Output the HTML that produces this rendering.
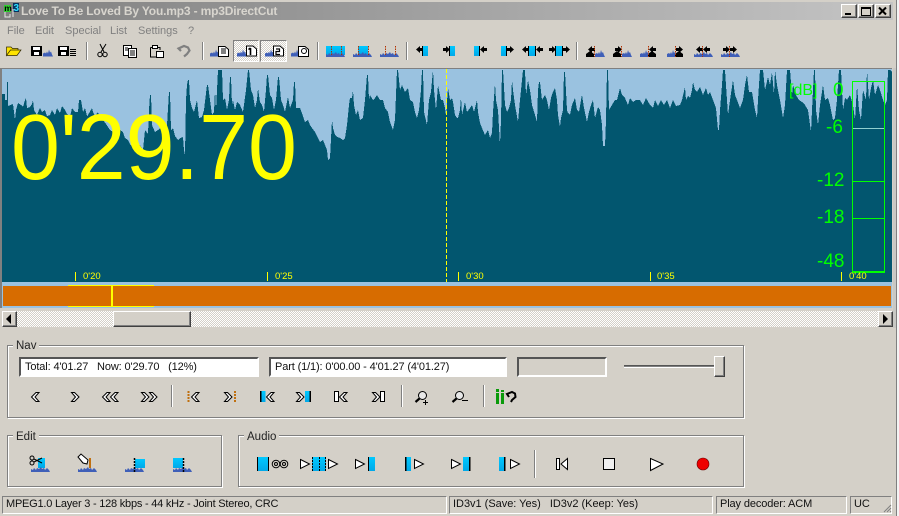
<!DOCTYPE html>
<html><head><meta charset="utf-8"><title>mp3DirectCut</title>
<style>
html,body{margin:0;padding:0;width:899px;height:516px;overflow:hidden;background:#d4d0c8}
body{position:relative;font-family:"Liberation Sans",sans-serif;font-size:11px;color:#000}
.a{position:absolute;white-space:pre}
.title{left:0;top:2px;width:893px;height:18px;background:linear-gradient(90deg,#808080,#c4c4c4)}
.ttxt{left:21px;top:3px;font-weight:bold;font-size:12px;letter-spacing:-.17px;line-height:16px;color:#d8d5ce}
.menu{top:24px;font-size:11px;line-height:14px;color:#808080}
.btn{background:#d4d0c8;box-sizing:border-box;border:1px solid;border-color:#fff #404040 #404040 #fff;box-shadow:inset -1px -1px 0 #808080}
.group{box-sizing:border-box;border:1px solid #808080;box-shadow:1px 1px 0 #fff,inset 1px 1px 0 #fff}
.leg{background:#d4d0c8;padding:0 3px;font-size:11.500px;line-height:14px;color:#222}
.field{box-sizing:border-box;background:#fff;border:2px solid;border-color:#555 #fff #fff #555;font-size:11px;letter-spacing:-.13px;line-height:15px;padding:1px 0 0 4px;color:#111}
.stat{box-sizing:border-box;top:496px;height:18px;border:1px solid;border-color:#808080 #fff #fff #808080;font-size:11px;letter-spacing:-.12px;line-height:15px;padding-left:3px;color:#111}
.dither{background:repeating-conic-gradient(#fff 0 25%,#d4d0c8 0 50%) 0 0/2px 2px}
.t{font-size:9.500px;line-height:12px;color:#ffff00;top:271px}
.g{font-size:19px;line-height:20px;color:#00ff00}
</style></head><body>
<div class="a title"></div>
<div class="a" style="left:896px;top:0;width:1px;height:516px;background:#808080"></div>
<div class="a" style="left:897px;top:0;width:2px;height:516px;background:#f4f4f4"></div>
<div class="a ttxt">Love To Be Loved By You.mp3 - mp3DirectCut</div>
<div class="a menu" style="left:7px">File</div>
<div class="a menu" style="left:35px">Edit</div>
<div class="a menu" style="left:65px">Special</div>
<div class="a menu" style="left:110px">List</div>
<div class="a menu" style="left:138px">Settings</div>
<div class="a menu" style="left:188px">?</div>
<div class="a btn" style="left:841px;top:4px;width:16px;height:14px"></div>
<div class="a btn" style="left:858px;top:4px;width:16px;height:14px"></div>
<div class="a btn" style="left:875px;top:4px;width:16px;height:14px"></div>
<div class="a dither" style="left:233px;top:40px;width:26px;height:22px;box-sizing:border-box;border:1px solid;border-color:#808080 #fff #fff #808080"></div>
<div class="a dither" style="left:260px;top:40px;width:27px;height:22px;box-sizing:border-box;border:1px solid;border-color:#808080 #fff #fff #808080"></div>

<!-- waveform -->
<div class="a" style="left:0;top:68px;width:892px;height:1px;background:#808080"></div>
<div class="a" style="left:0;top:68px;width:2px;height:240px;background:#808080"></div>
<svg class="a" style="left:2px;top:69px" width="890" height="214" viewBox="2 69 890 214">
<rect x="2" y="69" width="890" height="214" fill="#9ac2e0"/>
<polygon fill="#02566f" shape-rendering="crispEdges" points="2,282 2,94 5,94 5,100 7,100 7,82 8,82 8,106 13,104 15,120 16,110 18,103 21,105 23,107 25,100 26,98 27,108 30,107 32,104 33,100 34,110 37,115 39,110 40,108 42,112 45,110 47,116 50,115 52,110 55,115 57,108 60,113 62,106 65,110 67,114 70,117 72,108 75,112 78,112 79,100 81,100 83,112 85,108 87,116 88,115 92,108 93,112 95,116 98,112 100,118 103,120 106,124 108,127 110,130 113,132 116,134 118,135 120,130 123,132 125,138 128,140 130,144 133,148 136,146 140,145 143,150 145,130 148,134 149,110 150,95 151,95 152,125 155,132 158,130 160,128 163,134 165,132 167,125 169,92 170,92 171,130 173,128 175,136 178,140 180,138 183,137 184,150 185,155 186,100 187,85 188,80 189,80 190,100 192,108 194,112 197,100 199,118 202,117 204,110 207,85 208,85 210,100 212,115 214,112 215,90 216,110 218,70 222,70 223,100 225,98 227,110 229,100 230,77 231,77 232,105 233,100 235,110 237,102 240,105 243,112 246,90 248,70 249,70 251,90 253,95 255,108 257,100 258,88 260,102 262,105 264,112 266,90 267,75 268,75 270,95 272,98 274,110 276,100 278,77 279,77 281,100 283,105 285,112 288,97 290,108 293,100 294,82 295,82 296,108 300,108 303,116 305,122 308,120 310,125 312,128 315,132 318,138 320,142 323,140 325,145 327,150 328,160 330,158 332,120 333,128 335,135 337,137 340,138 343,140 345,138 347,125 349,105 350,98 352,98 353,90 354,105 356,115 358,110 360,120 363,118 365,100 367,75 368,75 369,100 370,95 373,100 375,98 377,95 380,100 383,100 385,108 388,112 390,122 393,130 395,120 397,70 398,70 400,90 402,85 405,92 408,88 410,100 413,102 415,112 417,118 419,110 421,90 422,70 423,70 424,112 427,125 429,100 431,92 433,70 434,90 436,110 438,85 441,100 443,100 445,108 446,115 448,88 450,100 452,98 453,102 455,115 457,118 458,118 460,110 461,97 462,115 465,102 467,112 470,108 472,105 474,112 477,100 478,112 480,123 482,128 485,135 488,130 490,138 492,133 493,112 495,83 496,100 498,110 500,145 501,120 502,70 503,70 505,105 507,112 509,108 511,100 512,80 513,90 515,105 518,122 520,100 521,90 523,70 525,70 526,95 528,80 530,90 532,105 535,115 537,122 538,90 539,82 540,82 542,100 545,95 547,100 549,110 551,98 553,92 555,88 557,100 558,115 560,127 561,118 563,110 564,72 565,72 567,110 568,113 570,115 572,105 575,98 577,110 579,112 581,100 582,95 584,108 587,122 589,112 591,105 593,100 595,118 598,107 600,110 602,125 603,146 605,146 606,120 607,70 608,70 609,110 612,105 615,100 617,100 620,88 622,95 625,98 628,105 630,98 633,102 636,100 640,100 643,105 646,98 650,105 653,108 655,100 658,106 661,100 664,105 667,100 670,108 673,100 676,106 680,105 682,100 685,87 686,100 688,96 690,98 692,90 693,82 695,90 697,92 700,87 703,95 706,88 708,95 710,92 713,100 716,108 718,130 719,130 720,110 722,85 723,70 725,70 727,100 728,115 730,100 733,80 735,95 737,100 740,108 743,100 745,85 747,75 749,92 752,92 755,110 757,118 758,100 760,70 763,70 765,90 768,77 770,85 772,72 774,95 775,70 777,85 780,100 783,118 785,105 787,70 790,70 792,95 793,85 796,95 799,100 802,102 805,105 808,110 811,132 812,110 814,70 815,70 816,110 818,125 820,105 823,85 825,100 828,98 830,105 833,120 835,118 837,100 839,70 841,70 843,110 845,98 847,100 850,95 853,105 855,120 857,86 859,110 861,120 863,90 866,100 867,70 869,100 871,88 873,80 875,95 878,85 880,90 883,100 885,105 887,100 888,70 890,70 892,72 892,282"/>
<line x1="446.500" y1="69" x2="446.500" y2="282" stroke="#ffff00" stroke-dasharray="4 2"/>
<g fill="#00ff00" shape-rendering="crispEdges">
<rect x="852" y="81" width="33" height="1"/>
<rect x="852" y="81" width="1" height="192"/>
<rect x="884" y="81" width="1" height="192"/>
<rect x="852" y="181" width="33" height="1"/>
<rect x="852" y="218" width="33" height="1"/>
<rect x="852" y="271" width="33" height="2"/>
<rect x="853" y="128" width="31" height="1" fill="#8fd0d0"/>
</g>
<g stroke="#ffff00" shape-rendering="crispEdges"><path d="M75.500 272V281M267.500 272V281M458.500 272V281M650.500 272V281M841.500 272V281"/></g>
</svg>
<div class="a" style="left:11px;top:99px;font-size:88px;line-height:100px;color:#ffff00;transform:scaleY(1.05);transform-origin:0 79px">0'29.70</div>
<div class="a" style="left:789px;top:82px;font-size:16px;line-height:18px;color:#00ff00">[dB]</div>
<div class="a g" style="left:833px;top:81px">0</div>
<div class="a g" style="left:826px;top:118px">-6</div>
<div class="a g" style="left:817px;top:171px">-12</div>
<div class="a g" style="left:817px;top:208px">-18</div>
<div class="a g" style="left:817px;top:252px">-48</div>
<div class="a t" style="left:83px">0'20</div>
<div class="a t" style="left:275px">0'25</div>
<div class="a t" style="left:466px">0'30</div>
<div class="a t" style="left:657px">0'35</div>
<div class="a t" style="left:849px">0'40</div>

<!-- overview -->
<div class="a" style="left:2px;top:283px;width:890px;height:25px;background:#9ac2e0"></div>
<div class="a" style="left:3px;top:286px;width:888px;height:20px;background:#d76c00"></div>
<div class="a" style="left:68px;top:285px;width:86px;height:1px;background:#ffff00"></div>
<div class="a" style="left:68px;top:306px;width:86px;height:1px;background:#ffff00"></div>
<div class="a" style="left:111px;top:285px;width:2px;height:22px;background:#ffff00"></div>
<div class="a" style="left:893px;top:68px;width:3px;height:260px;background:#c8c8c4"></div>

<!-- scrollbar -->
<div class="a dither" style="left:2px;top:311px;width:891px;height:16px"></div>
<div class="a btn" style="left:2px;top:311px;width:15px;height:16px"></div>
<div class="a btn" style="left:878px;top:311px;width:15px;height:16px"></div>
<div class="a btn" style="left:113px;top:311px;width:78px;height:16px"></div>

<!-- Nav -->
<div class="a group" style="left:7px;top:345px;width:737px;height:73px"></div>
<div class="a leg" style="left:13px;top:339px">Nav</div>
<div class="a field" style="left:19px;top:357px;width:240px;height:20px">Total: 4'01.27   Now: 0'29.70   (12%)</div>
<div class="a field" style="left:269px;top:357px;width:238px;height:20px">Part (1/1): 0'00.00 - 4'01.27 (4'01.27)</div>
<div class="a field" style="left:517px;top:357px;width:90px;height:20px;background:#d4d0c8"></div>
<div class="a" style="left:624px;top:365px;width:91px;height:1px;background:#555"></div>
<div class="a" style="left:624px;top:366px;width:91px;height:1px;background:#808080"></div>
<div class="a" style="left:624px;top:367px;width:91px;height:1px;background:#fff"></div>
<div class="a btn" style="left:714px;top:356px;width:11px;height:21px"></div>

<!-- Edit / Audio -->
<div class="a group" style="left:7px;top:435px;width:215px;height:52px"></div>
<div class="a leg" style="left:13px;top:430px">Edit</div>
<div class="a group" style="left:238px;top:435px;width:506px;height:52px"></div>
<div class="a leg" style="left:244px;top:430px">Audio</div>

<!-- status -->
<div class="a stat" style="left:2px;width:445px;letter-spacing:-.22px">MPEG1.0 Layer 3 - 128 kbps - 44 kHz - Joint Stereo, CRC</div>
<div class="a stat" style="left:449px;width:264px;letter-spacing:-.02px">ID3v1 (Save: Yes)   ID3v2 (Keep: Yes)</div>
<div class="a stat" style="left:716px;width:131px">Play decoder: ACM</div>
<div class="a stat" style="left:850px;width:42px">UC</div>

<!-- icons -->
<svg class="a" style="left:0;top:0" width="899" height="516" viewBox="0 0 899 516">
<defs>
<linearGradient id="b" x1="0" y1="0" x2="0" y2="1"><stop offset="0" stop-color="#00c8ff"/><stop offset="1" stop-color="#00a8e8"/></linearGradient>
<symbol id="w" overflow="visible"><polygon fill="#3f5fb8" points="0,7 0,4 2,3 3,4 4,2 5,4 6,0 7,3 8,2 9,5 10,7"/></symbol>
<symbol id="ww" overflow="visible"><polygon fill="#3f5fb8" points="0,7 0,4 2,5 3,3 5,5 6,3 8,4 10,2 11,4 13,3 14,5 16,3 18,5 19,7"/></symbol>
<symbol id="al" overflow="visible"><polygon fill="#000" points="0,3.500 4,0 4,2 7,2 7,5 4,5 4,7"/></symbol>
<symbol id="ar" overflow="visible"><polygon fill="#000" points="7,3.500 3,0 3,2 0,2 0,5 3,5 3,7"/></symbol>
<symbol id="cl" overflow="visible"><polygon fill="#fff" stroke="#000" points="5,0.500 8,0.500 4,5 8,9.500 5,9.500 0.500,5"/></symbol>
<symbol id="cr" overflow="visible"><polygon fill="#fff" stroke="#000" points="3.500,0.500 0.500,0.500 4.500,5 0.500,9.500 3.500,9.500 8,5"/></symbol>
<symbol id="pl" overflow="visible"><polygon fill="#fff" stroke="#000" points="0.500,0.500 9.500,5 0.500,9.500"/></symbol>
<symbol id="mag" overflow="visible"><circle cx="7.500" cy="4.500" r="4" fill="#e8e8e8" stroke="#000"/><path d="M4.500 7.500L0.500 11" stroke="#000" stroke-width="2.200" fill="none"/></symbol>
<symbol id="doc" overflow="visible"><path d="M0.500 0.500H7L10.500 3.500V10.500H0.500Z" fill="#fff" stroke="#000"/></symbol>
</defs>

<!-- app icon -->
<rect x="4" y="5" width="7" height="7" fill="#30d030"/><text x="4.300" y="11" font-family="Liberation Sans" font-weight="bold" font-size="8.500" fill="#000">m</text>
<rect x="13" y="3" width="6" height="9" fill="#063060"/><text x="13.500" y="11" font-family="Liberation Sans" font-weight="bold" font-size="10" fill="#30e0ff">3</text>
<path d="M5 12V17H10V14M13 9V17" stroke="#e8e8e8" fill="none"/>
<!-- window buttons -->
<path d="M845 13H851V15H845Z" fill="#000"/>
<path d="M861.500 7.500H870.500V15.500H861.500ZM861 8.500H871" fill="none" stroke="#000"/>
<path d="M879 7.500L886 14.500M886 7.500L879 14.500" stroke="#000" stroke-width="2" fill="none"/>

<!-- toolbar -->
<path d="M6.500 55.500V47H11L12.500 48.500H18V50H10.500L6.500 55.500H17L21 50H10.500Z" fill="#ffe400" stroke="#302800" stroke-width=".7"/>
<rect x="31" y="46" width="11" height="10" fill="#000"/><rect x="33" y="47" width="7" height="3" fill="#fff"/><rect x="34" y="52" width="5" height="3" fill="#fff"/>
<use href="#w" x="43" y="49.500"/>
<rect x="58" y="46" width="11" height="10" fill="#000"/><rect x="60" y="47" width="7" height="3" fill="#fff"/><rect x="61" y="52" width="5" height="3" fill="#fff"/>
<path d="M70 49.500H76M70 51.500H76M70 53.500H76M70 55.500H76" stroke="#000" fill="none"/>
<g fill="none" stroke="#000"><path d="M100 44L104 52M106 44L101 52"/><circle cx="100" cy="54.500" r="2.200"/><circle cx="105" cy="54.500" r="2.200"/></g>
<rect x="123.500" y="45.500" width="8" height="10" fill="#fff" stroke="#000"/><rect x="128.500" y="48.500" width="8" height="9" fill="#fff" stroke="#000"/>
<path d="M130 51H135M130 53H135M130 55H135M125 48H128M125 50H128" stroke="#000"/>
<path d="M150.500 47.500H160V50M150.500 47.500V57H156" fill="#d4d0c8" stroke="#000"/><rect x="152.500" y="45.500" width="5" height="3" fill="#fff" stroke="#000"/><rect x="156.500" y="51.500" width="7" height="6" fill="#fff" stroke="#000"/>
<path d="M181 51L178.500 48.500 184 46 188 47.500 189.500 50.500 187 54 184 56.500" fill="none" stroke="#808080" stroke-width="2.200"/>
<g shape-rendering="crispEdges">
<path d="M86 42H87V60H86ZM202 42H203V60H202ZM317 42H318V60H317ZM406 42H407V60H406ZM576 42H577V60H576Z" fill="#808080"/>
<path d="M87 42H88V60H87ZM203 42H204V60H203ZM318 42H319V60H318ZM407 42H408V60H407ZM577 42H578V60H577Z" fill="#fff"/>
</g>
<use href="#w" x="210" y="49.500"/><use href="#doc" x="218" y="46"/><path d="M221 49H226M221 51H226M221 53H226" stroke="#000"/>
<use href="#w" x="237" y="49.500"/><use href="#doc" x="246" y="45.500"/><path d="M250.500 48V55M248.500 49.500L250.500 48" stroke="#000" stroke-width="1.600" fill="none"/>
<use href="#w" x="265" y="49.500"/><use href="#doc" x="273" y="45.500"/><path d="M276 49H279.500V51.500H276V54.500H280" stroke="#000" stroke-width="1.200" fill="none"/>
<use href="#w" x="291" y="49.500"/><use href="#doc" x="298" y="46"/><circle cx="304" cy="51" r="2.500" fill="none" stroke="#000"/>

<rect x="326" y="46" width="19" height="9" fill="url(#b)"/><use href="#ww" x="326" y="50"/><path d="M331.500 46V56M341.500 46V56" stroke="#b03000" stroke-dasharray="1.500 1"/>
<rect x="358" y="46" width="10" height="9" fill="url(#b)"/><use href="#ww" x="353" y="50"/><path d="M358.500 46V56M368.500 46V56" stroke="#b03000" stroke-dasharray="1.500 1"/>
<use href="#ww" x="380" y="50"/><path d="M385.500 46V56M395.500 46V56" stroke="#b03000" stroke-dasharray="1.500 1"/>

<use href="#al" x="416" y="46"/><rect x="422" y="46" width="1" height="10" fill="#000"/><rect x="423" y="46" width="5" height="10" fill="url(#b)"/>
<use href="#ar" x="443" y="46"/><rect x="449" y="46" width="1" height="10" fill="#000"/><rect x="450" y="46" width="5" height="10" fill="url(#b)"/>
<rect x="474" y="46" width="5" height="10" fill="url(#b)"/><rect x="479" y="46" width="1" height="10" fill="#000"/><use href="#al" x="480" y="46"/>
<rect x="501" y="46" width="5" height="10" fill="url(#b)"/><rect x="506" y="46" width="1" height="10" fill="#000"/><use href="#ar" x="507" y="46"/>
<use href="#al" x="522" y="46"/><rect x="528" y="46" width="1" height="10" fill="#000"/><rect x="529" y="46" width="6" height="10" fill="url(#b)"/><rect x="535" y="46" width="1" height="10" fill="#000"/><use href="#al" x="536" y="46"/>
<use href="#ar" x="549" y="46"/><rect x="555" y="46" width="1" height="10" fill="#000"/><rect x="556" y="46" width="6" height="10" fill="url(#b)"/><rect x="562" y="46" width="1" height="10" fill="#000"/><use href="#ar" x="563" y="46"/>

<polygon points="586,57 586,54 590,51 594,54 594,57" fill="#000"/><use href="#al" x="588" y="46"/><use href="#w" x="595" y="50"/><path d="M594.500 46V57" stroke="#b03000" stroke-dasharray="1.500 1"/>
<polygon points="613,57 613,54 617,51 621,54 621,57" fill="#000"/><use href="#ar" x="615" y="46"/><use href="#w" x="622" y="50"/><path d="M621.500 46V57" stroke="#b03000" stroke-dasharray="1.500 1"/>
<use href="#w" x="640" y="50"/><polygon points="648,57 648,54 652,51 656,54 656,57" fill="#000"/><use href="#al" x="649" y="46"/><path d="M648.500 46V57" stroke="#b03000" stroke-dasharray="1.500 1"/>
<use href="#w" x="667" y="50"/><polygon points="675,57 675,54 679,51 683,54 683,57" fill="#000"/><use href="#ar" x="676" y="46"/><path d="M675.500 46V57" stroke="#b03000" stroke-dasharray="1.500 1"/>
<use href="#ww" x="694" y="50"/><use href="#al" x="696" y="46"/><use href="#al" x="703" y="46"/><path d="M702.500 46V57" stroke="#b03000" stroke-dasharray="1.500 1"/>
<use href="#ww" x="721" y="50"/><use href="#ar" x="723" y="46"/><use href="#ar" x="730" y="46"/><path d="M729.500 46V57" stroke="#b03000" stroke-dasharray="1.500 1"/>

<!-- scroll arrows -->
<polygon points="6,319 11,314 11,324" fill="#000"/>
<polygon points="888,319 883,314 883,324" fill="#000"/>

<!-- nav icons -->
<use href="#cl" x="31" y="392"/>
<use href="#cr" x="71" y="392"/>
<use href="#cl" x="102" y="392"/><use href="#cl" x="110" y="392"/>
<use href="#cr" x="141" y="392"/><use href="#cr" x="149" y="392"/>
<g shape-rendering="crispEdges">
<path d="M171 385H172V407H171ZM401 385H402V407H401ZM483 385H484V407H483ZM534 450H535V478H534Z" fill="#808080"/>
<path d="M172 385H173V407H172ZM402 385H403V407H402ZM484 385H485V407H484ZM535 450H536V478H535Z" fill="#fff"/>
</g>
<path d="M188.500 391V402" stroke="#c07010" stroke-width="2" stroke-dasharray="2 1"/><use href="#cl" x="191" y="392"/>
<use href="#cr" x="224" y="392"/><path d="M235 391V402" stroke="#c07010" stroke-width="2" stroke-dasharray="2 1"/>
<rect x="260" y="391" width="1.500" height="11" fill="#000"/><rect x="261.500" y="391" width="4" height="11" fill="url(#b)"/><use href="#cl" x="266" y="392"/>
<use href="#cr" x="296" y="392"/><rect x="305" y="391" width="5" height="11" fill="url(#b)"/><rect x="309.500" y="391" width="1.500" height="11" fill="#000"/>
<rect x="334.500" y="391.500" width="4" height="10" fill="#fff" stroke="#000"/><use href="#cl" x="339" y="392"/>
<use href="#cr" x="372" y="392"/><rect x="380.500" y="391.500" width="4" height="10" fill="#fff" stroke="#000"/>
<use href="#mag" x="415" y="391"/><path d="M425.500 400V405M423 402.500H428" stroke="#000"/>
<use href="#mag" x="452" y="391"/><path d="M462 400.500H468" stroke="#000"/>
<rect x="496" y="389" width="3" height="3" fill="#0a9a0a"/><rect x="496" y="393" width="3" height="11" fill="#0a9a0a"/><rect x="501" y="390" width="3" height="2" fill="#0a9a0a"/><rect x="501" y="393" width="3" height="11" fill="#0a9a0a"/>
<path d="M509 397L507 394 512 392 515 393.500 515.500 397 512 400 511 402" fill="none" stroke="#000" stroke-width="2"/>

<!-- edit icons -->
<rect x="38" y="458" width="7" height="10" fill="url(#b)"/>
<use href="#ww" x="31" y="465"/>
<g fill="none" stroke="#000"><circle cx="32" cy="458" r="2"/><circle cx="32" cy="463" r="2"/><path d="M34 459L42 463M34 462L42 458"/></g>
<rect x="89" y="458" width="2" height="10" fill="#c07010"/><use href="#ww" x="78" y="465"/>
<path d="M78 457L81 454 88 460 87 464 83 463Z" fill="#fff" stroke="#000"/>
<rect x="135" y="459" width="10" height="9" fill="url(#b)"/><use href="#ww" x="125" y="465"/><path d="M134.500 458V472" stroke="#000" stroke-dasharray="2 1" stroke-width="1.500"/>
<rect x="173" y="458" width="10" height="10" fill="url(#b)"/><use href="#ww" x="173" y="465"/><path d="M183.500 458V472" stroke="#000" stroke-dasharray="2 1" stroke-width="1.500"/>

<!-- audio icons -->
<rect x="257" y="457" width="12" height="14" fill="url(#b)"/><path d="M257.500 457V471M268.500 457V471" stroke="#000"/>
<g fill="none" stroke="#000"><circle cx="276" cy="464" r="3.800"/><circle cx="276" cy="464" r="1.500"/><circle cx="284" cy="464" r="3.800"/><circle cx="284" cy="464" r="1.500"/></g>
<use href="#pl" x="300" y="459"/><rect x="312" y="457" width="14" height="14" fill="url(#b)"/><path d="M312.500 457V471M325.500 457V471M319.500 457V471" stroke="#000" stroke-dasharray="2 1"/><use href="#pl" x="328" y="459"/>
<use href="#pl" x="355" y="459"/><rect x="368" y="457" width="7" height="14" fill="url(#b)"/><rect x="368" y="457" width="1" height="14" fill="#000"/>
<rect x="405" y="457" width="6" height="14" fill="url(#b)"/><rect x="405" y="457" width="1.500" height="14" fill="#000"/><use href="#pl" x="414" y="459"/>
<use href="#pl" x="451" y="459"/><rect x="463" y="457" width="6" height="14" fill="url(#b)"/><rect x="469" y="457" width="1.500" height="14" fill="#000"/>
<rect x="499" y="457" width="5" height="14" fill="url(#b)"/><rect x="504" y="457" width="1.500" height="14" fill="#000"/><use href="#pl" x="510" y="459"/>
<rect x="556.500" y="458.500" width="3" height="11" fill="#fff" stroke="#000"/><polygon points="567.500,458.500 561,464 567.500,469.500" fill="#fff" stroke="#000"/>
<rect x="603.500" y="458.500" width="11" height="11" fill="#f0f0f0" stroke="#000"/>
<polygon points="650.500,458.500 663,464 650.500,470.500" fill="#fff" stroke="#000"/>
<circle cx="703" cy="464" r="6" fill="#ee0000" stroke="#600" stroke-width=".6"/>

<!-- grip -->
<path d="M891 505L884 512M891 508L887 512M891 511L890 512" stroke="#808080" fill="none"/>
</svg>
</body></html>
